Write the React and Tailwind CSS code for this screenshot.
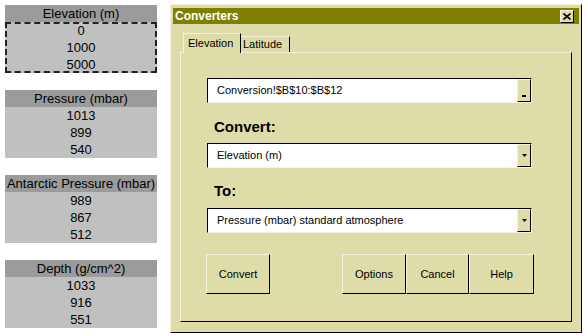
import React from 'react';

const blocks = [
    { title: 'Elevation (m)', values: ['0', '1000', '5000'], marquee: true },
    { title: 'Pressure (mbar)', values: ['1013', '899', '540'] },
    { title: 'Antarctic Pressure (mbar)', values: ['989', '867', '512'] },
    { title: 'Depth (g/cm^2)', values: ['1033', '916', '551'] },
];

function SheetBlock({ title, values, marquee }) {
    return (
        <div className="w-[152px] text-[13px] leading-[17px] text-black text-center">
            <div className="h-[17px] bg-[#9b9b9b]">{title}</div>
            <div className={`h-[51px] bg-[#c0c0c0] flex flex-col justify-center ${marquee ? 'border-2 border-dashed border-[#222]' : ''}`}>
                {values.map(v => (
                    <div key={v} className="h-[17px]">{v}</div>
                ))}
            </div>
        </div>
    );
}

function Field({ text, kind }) {
    return (
        <div className="w-[325px] h-[25px] flex bg-white border-t border-l border-t-black border-l-black border-r border-b border-r-[#f4f3e1] border-b-[#f4f3e1]">
            <div className="flex-1 pl-[9px] flex items-center text-[11px] text-black">{text}</div>
            <div className="w-[14px] h-full bg-[#dedca9] border-t border-l border-[#f4f3e1] border-r border-b border-r-black border-b-black flex items-center justify-center">
                {kind === 'ref' ? (
                    <div className="w-[4px] h-[2px] bg-black mt-[10px]" />
                ) : (
                    <svg width="5" height="3" viewBox="0 0 5 3">
                        <path d="M0 0 H5 L2.5 3 Z" fill="#000" />
                    </svg>
                )}
            </div>
        </div>
    );
}

function DlgButton({ label, className = '' }) {
    return (
        <button className={`h-[40px] bg-[#dedca9] border-t border-l border-[#f4f3e1] border-r border-b border-r-black border-b-black text-[11px] text-black ${className}`}>
            {label}
        </button>
    );
}

export default function App() {
    return (
        <div className="w-[586px] h-[336px] bg-white flex overflow-hidden" style={{ fontFamily: '"Liberation Sans", Arial, sans-serif' }}>
            {/* Worksheet cells */}
            <div className="pl-[5px] pt-[5px] flex flex-col gap-[17px]">
                {blocks.map(b => (
                    <SheetBlock key={b.title} {...b} />
                ))}
            </div>

            {/* Converters dialog */}
            <div className="ml-[13px] mt-[4px] w-[412px] h-[329px] bg-[#dedca9] border-t border-l border-[#f4f3e1] border-r border-b border-r-black border-b-black pt-[3px] px-[2px]">
                <div className="h-[16px] bg-[#808000] flex items-center justify-between pl-[2px] pr-[5px]">
                    <span className="text-white font-bold text-[12px]">Converters</span>
                    <div className="w-[14px] h-[13px] bg-[#dedca9] border-t border-l border-[#f4f3e1] border-r border-b border-r-black border-b-black flex items-center justify-center">
                        <svg width="8" height="7" viewBox="0 0 8 7">
                            <path d="M0.5 0.5 L7.5 6.5 M7.5 0.5 L0.5 6.5" stroke="#000" strokeWidth="1.6" />
                        </svg>
                    </div>
                </div>

                <div className="px-[7px] pt-[9px]">
                    {/* Tabs */}
                    <div className="h-[19px] flex items-end pl-[3px] relative z-10">
                        <div className="w-[58px] h-[20px] -mb-px bg-[#dedca9] border-t border-l border-[#f4f3e1] border-r border-r-black flex items-center pl-[4px] text-[11px] text-black">
                            Elevation
                        </div>
                        <div className="w-[49px] h-[16px] border-t border-[#f4f3e1] border-r border-r-black flex items-center pl-[2px] text-[11px] text-black">
                            Latitude
                        </div>
                    </div>

                    {/* Tab panel */}
                    <div className="h-[270px] border-t border-l border-[#f4f3e1] border-r border-b border-r-black border-b-black pl-[26px] pt-[25px]">
                        <Field text="Conversion!$B$10:$B$12" kind="ref" />
                        <div className="mt-[15px] h-[18px] leading-[18px] pl-[7px] text-[15px] font-bold text-black">Convert:</div>
                        <div className="mt-[7px]">
                            <Field text="Elevation (m)" />
                        </div>
                        <div className="mt-[14px] h-[18px] leading-[18px] pl-[7px] text-[15px] font-bold text-black">To:</div>
                        <div className="mt-[8px]">
                            <Field text="Pressure (mbar) standard atmosphere" />
                        </div>
                        <div className="mt-[21px] -ml-px w-[328px] flex justify-between">
                            <DlgButton label="Convert" className="w-[64px]" />
                            <div className="flex">
                                <DlgButton label="Options" className="w-[64px]" />
                                <DlgButton label="Cancel" className="w-[63px]" />
                                <DlgButton label="Help" className="w-[65px]" />
                            </div>
                        </div>
                    </div>
                </div>
            </div>
        </div>
    );
}
